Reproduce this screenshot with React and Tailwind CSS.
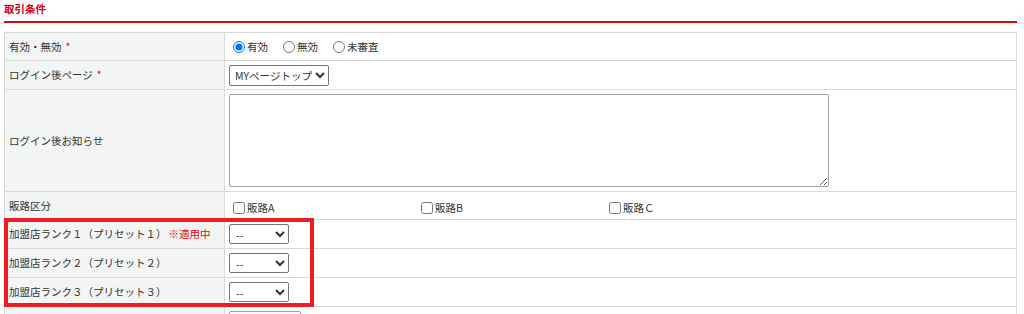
import React from "react";

const font = { fontFamily: '"Noto Sans CJK JP", "Noto Sans", sans-serif' };

function Row({ h, label, children, last }) {
  return (
    <div className={`flex ${h} ${last ? "" : "border-b border-[#d9d9d9]"}`}>
      <div className="w-[220px] shrink-0 bg-[#f3f4f4] border-r border-[#d9d9d9] pl-[4px] flex items-center text-[10.5px] text-[#333]">
        {label}
      </div>
      <div className="flex-1 pl-[4px] flex items-center text-[10.5px] text-[#333]">
        {children}
      </div>
    </div>
  );
}

function Req() {
  return <span className="text-[#e60012] ml-[4px]">*</span>;
}

function SmallSelect() {
  return (
    <select className="w-[60px] h-[20px] border border-[#767676] rounded-[2px] bg-white text-[10.5px] text-[#333] pl-[2px]">
      <option>--</option>
    </select>
  );
}

export default function App() {
  return (
    <div className="w-[1024px] h-[314px] bg-white overflow-hidden relative" style={font}>
      <div className="pl-[4px] pr-[7px]">
        <div className="h-[21px] pt-[2px] text-[10.5px] font-bold text-[#d0021b] leading-[14px]">取引条件</div>
        <div className="h-[2px] bg-[#d10a0a]" />
        <div className="h-[9px]" />
        <div className="w-[1013px] border border-[#d9d9d9]">
          <Row h="h-[28px]" label={<>有効・無効<Req /></>}>
            <label className="flex items-center mr-[15px]">
              <input type="radio" name="v" defaultChecked className="w-[12px] h-[12px] ml-[4px] mr-[2px]" />
              有効
            </label>
            <label className="flex items-center mr-[15px]">
              <input type="radio" name="v" className="w-[12px] h-[12px] mr-[2px]" />
              無効
            </label>
            <label className="flex items-center">
              <input type="radio" name="v" className="w-[12px] h-[12px] mr-[2px]" />
              未審査
            </label>
          </Row>
          <Row h="h-[29px]" label={<>ログイン後ページ<Req /></>}>
            <select className="w-[100px] h-[21px] border border-[#767676] rounded-[2px] bg-white text-[10.5px] text-[#333] pl-[1px]">
              <option>MYページトップ</option>
            </select>
          </Row>
          <Row h="h-[102px]" label="ログイン後お知らせ">
            <textarea className="w-[600px] h-[93px] border border-[#a0a0a0] rounded-[2px] bg-white" />
          </Row>
          <Row h="h-[28px]" label="販路区分">
            <div className="grid grid-cols-[188px_188px_188px] pt-[4px]">
              {["販路A", "販路B", "販路Ｃ"].map((t) => (
                <label key={t} className="flex items-center">
                  <input type="checkbox" className="w-[12px] h-[12px] ml-[4px] mr-[2px]" />
                  {t}
                </label>
              ))}
            </div>
          </Row>
          <Row h="h-[29px]" label={<>加盟店ランク１（プリセット１）<span className="text-[#e60012] ml-[2px]">※適用中</span></>}>
            <SmallSelect />
          </Row>
          <Row h="h-[29px]" label="加盟店ランク２（プリセット２）">
            <SmallSelect />
          </Row>
          <Row h="h-[29px]" label="加盟店ランク３（プリセット３）">
            <SmallSelect />
          </Row>
          <div className="flex h-[30px]">
            <div className="w-[220px] shrink-0 bg-[#f3f4f4] border-r border-[#d9d9d9] pl-[4px] pt-[6px] text-[10.5px] text-[#333]">
              ポイント率
            </div>
            <div className="flex-1 pl-[4px] pt-[4px]">
              <div className="w-[72px] h-[20px] border border-[#a0a0a0] rounded-[2px]" />
            </div>
          </div>
        </div>
      </div>
      <div className="absolute left-[4px] top-[218px] w-[310px] h-[89px] border-4 border-[#ee1c25] pointer-events-none" />
    </div>
  );
}
